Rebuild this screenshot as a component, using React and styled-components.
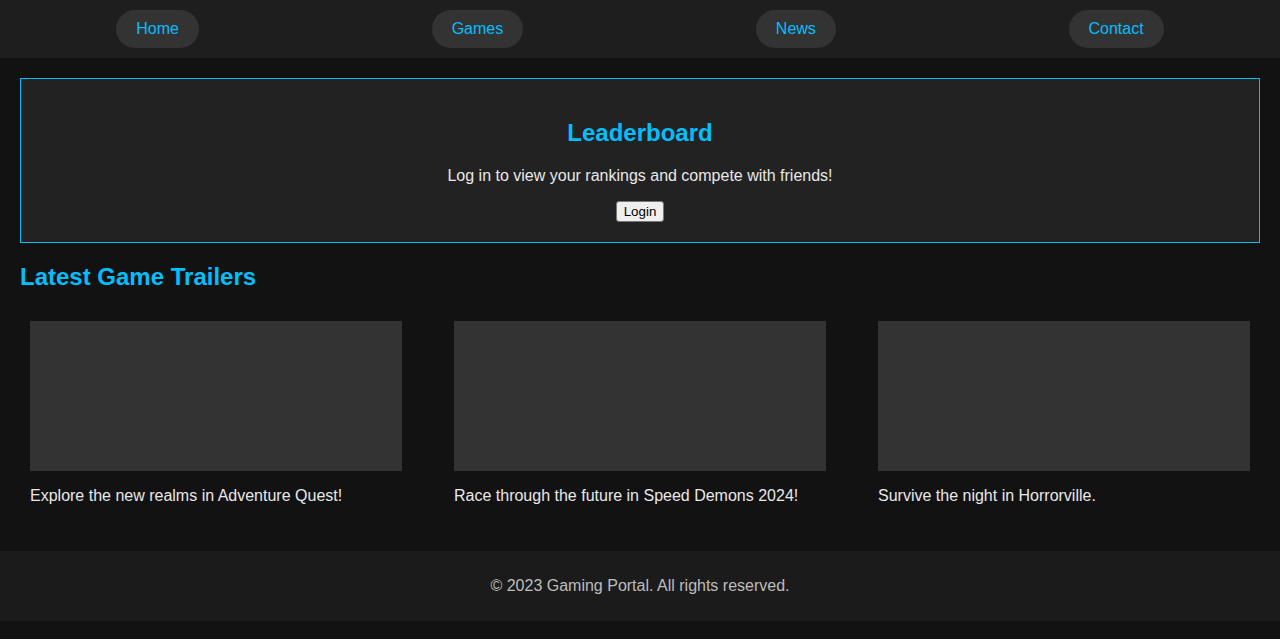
import React from "react";
import styled, { createGlobalStyle } from "styled-components";

const Global = createGlobalStyle`
  html, body { margin: 0; padding: 0; }
  body {
    background: #121212;
    color: #e0e0e0;
    font-family: "Liberation Sans", Arial, sans-serif;
    font-size: 16px;
  }
`;

const Nav = styled.nav`
  background: #1e1e1e;
  padding: 10px 0;
  display: flex;
  justify-content: space-around;
`;

const NavLink = styled.a`
  display: block;
  background: #333;
  color: #00bfff;
  text-decoration: none;
  padding: 10px 20px;
  border-radius: 20px;
  line-height: 18px;
`;

const Main = styled.main`
  padding: 20px;
`;

const Board = styled.section`
  background: #222;
  border: 1px solid #00bfff;
  padding: 20px;
  text-align: center;
`;

const Heading = styled.h2`
  color: #00bfff;
  font-size: 24px;
  line-height: 28px;
  margin: 20px 0;
`;

const Text = styled.p`
  margin: 16px 0;
  line-height: 18px;
  color: ${(p) => p.$color || "#e8e8e8"};
`;

const LoginButton = styled.button`
  font-family: "Liberation Sans", Arial, sans-serif;
  font-size: 13.333px;
  background: #efefef;
  color: #000;
  border: 1px solid #767676;
  border-radius: 3px;
  padding: 1px 7px;
  height: 21px;
`;

const Cards = styled.div`
  display: flex;
  justify-content: space-between;
`;

const Card = styled.div`
  width: 30%;
  padding: 10px;
`;

const Thumb = styled.div`
  height: 150px;
  background: #333;
`;

const Footer = styled.footer`
  background: #1b1b1b;
  padding: 10px;
  text-align: center;
`;

const trailers = [
  "Explore the new realms in Adventure Quest!",
  "Race through the future in Speed Demons 2024!",
  "Survive the night in Horrorville.",
];

export default function App() {
  return (
    <>
      <Global />
      <Nav>
        {["Home", "Games", "News", "Contact"].map((l) => (
          <NavLink key={l} href="#">{l}</NavLink>
        ))}
      </Nav>
      <Main>
        <Board>
          <Heading>Leaderboard</Heading>
          <Text>Log in to view your rankings and compete with friends!</Text>
          <LoginButton>Login</LoginButton>
        </Board>
        <Heading>Latest Game Trailers</Heading>
        <Cards>
          {trailers.map((t) => (
            <Card key={t}>
              <Thumb />
              <Text>{t}</Text>
            </Card>
          ))}
        </Cards>
      </Main>
      <Footer>
        <Text $color="#bdbdbd">© 2023 Gaming Portal. All rights reserved.</Text>
      </Footer>
    </>
  );
}
